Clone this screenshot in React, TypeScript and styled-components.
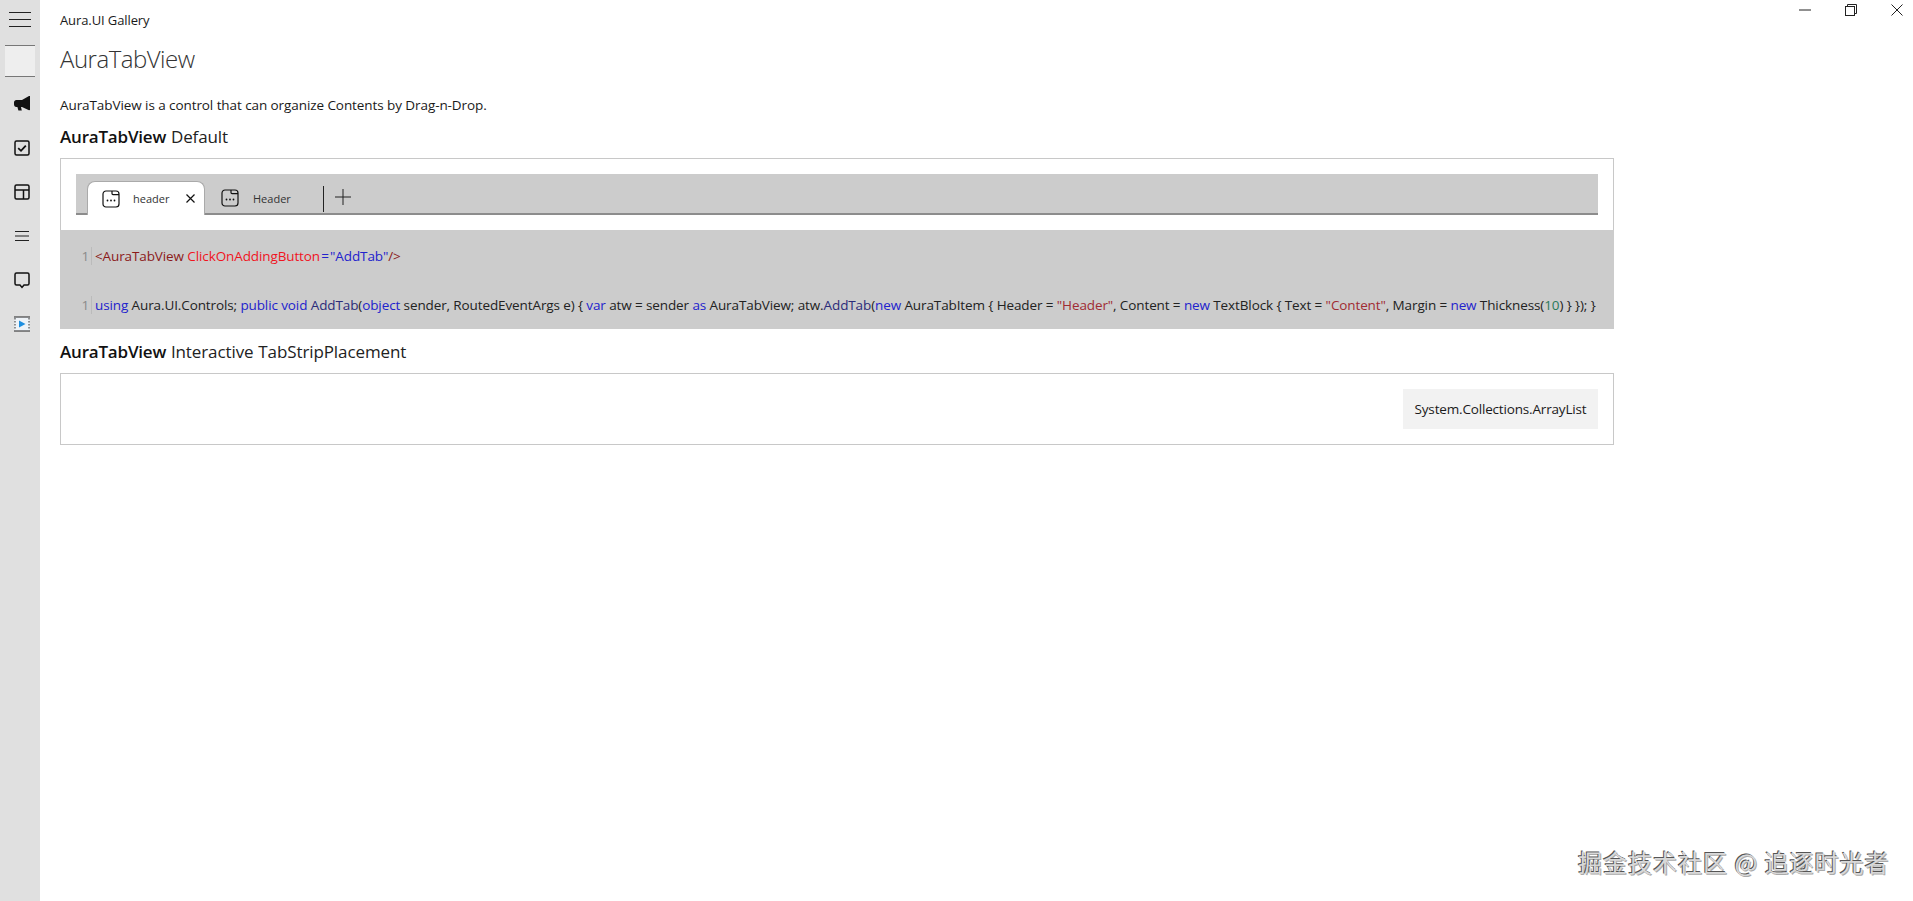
import React from "react";
import styled, { createGlobalStyle } from "styled-components";

const GlobalStyle = createGlobalStyle`
  html, body { margin: 0; padding: 0; background: #fff; }
  body { font-family: "Open Sans", "Noto Sans", sans-serif; color: #1a1a1a; overflow: hidden; }
`;

const CalendarIcon = () => (
  <svg width="18" height="18" viewBox="0 0 18 18" fill="none" stroke="#111" strokeWidth="1.2">
    <rect x="1" y="1" width="16" height="16" rx="3" />
    <path d="M10 1v2.600a1 1 0 0 0 1 1h6" />
    <circle cx="5.500" cy="10.500" r=".9" fill="#111" stroke="none" />
    <circle cx="9" cy="10.500" r=".9" fill="#111" stroke="none" />
    <circle cx="12.500" cy="10.500" r=".9" fill="#111" stroke="none" />
  </svg>
);

const MegaphoneIcon = () => (
  <svg width="18" height="18" viewBox="0 0 18 18" fill="#111">
    <path d="M17 1v14l-1 .2L9 12H8l.8 3.600H5.400L4.400 12H3.400C1.800 12 1 10.800 1 9.200V7.400C1 6 2 5 3.400 5H9l7-4z" />
  </svg>
);

const CheckIcon = () => (
  <svg width="16" height="16" viewBox="0 0 16 16" fill="none" stroke="#111">
    <rect x="1" y="1" width="14" height="14" rx="1.500" strokeWidth="1.500" />
    <path d="M4.200 8.200 7 10.800l4.800-5.200" strokeWidth="1.800" />
  </svg>
);

const LayoutIcon = () => (
  <svg width="16" height="16" viewBox="0 0 16 16" fill="none" stroke="#111" strokeWidth="1.500">
    <rect x="1" y="1" width="14" height="14" rx="1.500" />
    <path d="M1 6h14M9.500 6v9" />
  </svg>
);

const LinesIcon = () => (
  <svg width="14" height="12" viewBox="0 0 14 12" fill="none" stroke="#222" strokeWidth="1">
    <path d="M0 1.500h14M0 6h14M0 10.500h14" />
  </svg>
);

const ChatIcon = () => (
  <svg width="16" height="17" viewBox="0 0 16 17" fill="none" stroke="#111" strokeWidth="1.500">
    <path d="M2.500 1h11A1.500 1.500 0 0 1 15 2.500v9a1.500 1.500 0 0 1-1.500 1.500H10l-2 2.400L6 13H2.500A1.500 1.500 0 0 1 1 11.500v-9A1.500 1.500 0 0 1 2.500 1z" />
  </svg>
);

const VideoIcon = () => (
  <svg width="16" height="16" viewBox="0 0 16 16" fill="none">
    <rect x=".5" y="1" width="15" height="14" fill="#eef3f8" />
    <path d="M0 1h16M0 15h16" stroke="#222" strokeWidth="1.200" />
    <path d="M1 2v12M15 2v12" stroke="#333" strokeWidth="1" strokeDasharray="1.500 1.500" />
    <path d="M5 4.500v7L11.500 8z" fill="#1e8fe0" />
  </svg>
);

const Page = styled.div`
  position: relative;
  display: flex;
  width: 1913px;
  height: 901px;
`;

const Sidebar = styled.nav`
  width: 40px;
  flex-shrink: 0;
  background: #e0e0e0;
  display: flex;
  flex-direction: column;
  align-items: center;
`;

const Hamburger = styled.div`
  width: 22px;
  height: 15px;
  margin-top: 12px;
  border-top: 1px solid #222;
  border-bottom: 1px solid #222;
  position: relative;
  box-sizing: border-box;
  &::after {
    content: "";
    position: absolute;
    left: 0;
    right: 0;
    top: 6px;
    height: 1px;
    background: #222;
  }
`;

const SelectedItem = styled.div`
  width: 30px;
  height: 32px;
  margin-top: 18px;
  box-sizing: border-box;
  background: #eeeeee;
  border-top: 1px solid #777;
  border-bottom: 1px solid #777;
`;

const NavItem = styled.div`
  height: 44px;
  width: 100%;
  display: flex;
  align-items: center;
  justify-content: center;
  padding-left: 4px;
  box-sizing: border-box;
`;

const NavList = styled.div`
  margin-top: 5px;
  display: flex;
  flex-direction: column;
`;

const Main = styled.main`
  flex: 1;
  padding-left: 20px;
  display: flex;
  flex-direction: column;
  align-items: flex-start;
`;

const AppTitle = styled.div`
  font-size: 13px;
  line-height: 16px;
  margin-top: 12px;
  letter-spacing: -0.1px;
`;

const PageTitle = styled.h1`
  font-family: "Open Sans", sans-serif;
  font-weight: 300;
  font-size: 24px;
  line-height: 32px;
  margin: 15px 0 0;
  color: #333;
  letter-spacing: -0.5px;
`;

const Description = styled.p`
  font-size: 13.5px;
  line-height: 18px;
  margin: 21px 0 0;
  letter-spacing: -0.08px;
`;

const SectionTitle = styled.h2<{ $first?: boolean }>`
  font-size: 17px;
  line-height: 24px;
  font-weight: 400;
  margin: 11px 0 0;
  letter-spacing: -0.1px;
  word-spacing: 0.5px;
  color: #222;
  strong {
    font-weight: 600;
    color: #111;
    letter-spacing: -0.2px;
  }
`;

const Card = styled.section`
  width: 1554px;
  box-sizing: border-box;
  border: 1px solid #c8c8c8;
  margin-top: 9px;
`;

const DemoArea = styled.div`
  padding: 15px;
  height: 71px;
  box-sizing: border-box;
`;

const TabStrip = styled.div`
  height: 41px;
  background: #cccccc;
  border-bottom: 2px solid #8c8c8c;
  box-sizing: border-box;
  display: flex;
  align-items: flex-end;
  padding-left: 11px;
  position: relative;
`;

const Tab = styled.div<{ $active?: boolean }>`
  height: 34px;
  margin-bottom: -2px;
  width: ${({ $active }) => ($active ? "118px" : "116px")};
  box-sizing: border-box;
  display: flex;
  align-items: center;
  padding-left: ${({ $active }) => ($active ? "14px" : "16px")};
  font-size: 11px;
  color: #333;
  background: ${({ $active }) => ($active ? "#fff" : "transparent")};
  border-radius: 8px 8px 0 0;
  ${({ $active }) => $active && "border: 1px solid #aaa; border-bottom: none;"}
`;

const TabLabel = styled.span<{ $active?: boolean }>`
  margin-left: ${({ $active }) => ($active ? "13px" : "14px")};
  flex: 1;
`;

const TabClose = styled.svg`
  margin-right: 9px;
`;

const TabDivider = styled.div`
  width: 1px;
  height: 26px;
  background: #222;
  align-self: flex-start;
  margin: 12px 0 0 2px;
`;

const AddTab = styled.svg`
  align-self: flex-start;
  margin: 15px 0 0 11px;
`;

const CodeBlock = styled.div`
  background: #cccccc;
  height: 99px;
  margin: 0 -1px -1px;
  padding-top: 17px;
  box-sizing: border-box;
  display: flex;
  flex-direction: column;
  gap: 31px;
`;

const CodeLine = styled.div`
  display: flex;
  font-size: 13.5px;
  line-height: 18px;
  height: 18px;
  white-space: nowrap;
  color: #222;
  letter-spacing: -0.11px;
`;

const LineNo = styled.span`
  width: 32px;
  text-align: right;
  color: #8a8a8a;
  border-right: 1px solid #bbb;
  padding-right: 2px;
  margin-right: 3px;
  box-sizing: border-box;
  flex-shrink: 0;
`;

const Token = styled.span<{ $c: string }>`
  color: ${({ $c }) => $c};
  white-space: pre;
`;

const PlacementRow = styled.div`
  height: 70px;
  box-sizing: border-box;
  padding: 15px;
  display: flex;
  justify-content: flex-end;
`;

const PlacementBox = styled.div`
  width: 195px;
  height: 40px;
  background: #f2f2f2;
  font-size: 13.5px;
  display: flex;
  align-items: center;
  justify-content: center;
  letter-spacing: -0.17px;
  padding-bottom: 1px;
  box-sizing: border-box;
`;

const WindowButtons = styled.div`
  position: absolute;
  top: 3px;
  right: -7px;
  display: flex;
  align-items: center;
  height: 14px;
`;

const WindowButton = styled.div`
  width: 46px;
  display: flex;
  justify-content: center;
  align-items: center;
`;

const Watermark = styled.div`
  position: absolute;
  left: 1578px;
  top: 844px;
  font-family: "Noto Sans CJK SC", sans-serif;
  font-size: 24px;
  line-height: 36px;
  color: #d8d8d8;
  letter-spacing: 1px;
  white-space: nowrap;
  text-shadow: -1px -1px 0 #555, 1px 1px 0 #aaa;
`;

const xaml: [string, string][] = [
  ["<AuraTabView ", "#8b1a1a"],
  ["ClickOnAddingButton", "#f0141e"],
  ["\u200a=\u200a", "#2222cc"],
  ['"AddTab"', "#2222cc"],
  ["/>", "#8b1a1a"],
];

const B = "#2222cc";
const T = "#222";
const R = "#a02b33";

const csharp: [string, string][] = [
  ["using", B], [" Aura.UI.Controls; ", T], ["public void", B], [" ", T],
  ["AddTab", "#2b2b7a"], ["(", T], ["object", B], [" sender, RoutedEventArgs e) { ", T],
  ["var", B], [" atw = sender ", T], ["as", B], [" AuraTabView; atw.", T],
  ["AddTab", "#2b2b7a"], ["(", T], ["new", B], [" AuraTabItem { Header = ", T],
  ['"Header"', R], [", Content = ", T], ["new", B], [" TextBlock { Text = ", T],
  ['"Content"', R], [", Margin = ", T], ["new", B], [" Thickness(", T],
  ["10", "#2a7a5a"], [") } }); }", T],
];

export default function App() {
  const navIcons = [
    <MegaphoneIcon />, <CheckIcon />, <LayoutIcon />, <LinesIcon />, <ChatIcon />, <VideoIcon />,
  ];

  return (
    <Page>
      <GlobalStyle />
      <Sidebar>
        <Hamburger />
        <SelectedItem />
        <NavList>
          {navIcons.map((icon, i) => (
            <NavItem key={i}>{icon}</NavItem>
          ))}
        </NavList>
      </Sidebar>
      <Main>
        <AppTitle>Aura.UI Gallery</AppTitle>
        <PageTitle>AuraTabView</PageTitle>
        <Description>AuraTabView is a control that can organize Contents by Drag-n-Drop.</Description>
        <SectionTitle>
          <strong>AuraTabView</strong> Default
        </SectionTitle>
        <Card>
          <DemoArea>
            <TabStrip>
              <Tab $active>
                <CalendarIcon />
                <TabLabel $active>header</TabLabel>
                <TabClose width="9" height="9" viewBox="0 0 9 9" stroke="#111" strokeWidth="1.200">
                  <path d="M.5.5l8 8M8.500.5l-8 8" />
                </TabClose>
              </Tab>
              <Tab>
                <CalendarIcon />
                <TabLabel>Header</TabLabel>
              </Tab>
              <TabDivider />
              <AddTab width="16" height="16" viewBox="0 0 16 16" stroke="#222" strokeWidth="1">
                <path d="M8 0v16M0 8h16" />
              </AddTab>
            </TabStrip>
          </DemoArea>
          <CodeBlock>
            <CodeLine>
              <LineNo>1</LineNo>
              {xaml.map(([text, color], i) => (
                <Token key={i} $c={color}>{text}</Token>
              ))}
            </CodeLine>
            <CodeLine>
              <LineNo>1</LineNo>
              {csharp.map(([text, color], i) => (
                <Token key={i} $c={color}>{text}</Token>
              ))}
            </CodeLine>
          </CodeBlock>
        </Card>
        <SectionTitle>
          <strong>AuraTabView</strong> Interactive TabStripPlacement
        </SectionTitle>
        <Card>
          <PlacementRow>
            <PlacementBox>System.Collections.ArrayList</PlacementBox>
          </PlacementRow>
        </Card>
      </Main>
      <WindowButtons>
        <WindowButton>
          <svg width="12" height="2" viewBox="0 0 12 2" stroke="#222"><path d="M0 1h12" /></svg>
        </WindowButton>
        <WindowButton>
          <svg width="12" height="12" viewBox="0 0 12 12" fill="none" stroke="#222">
            <rect x=".5" y="2.500" width="9" height="9" />
            <path d="M2.500 2.500v-2h9v9h-2" />
          </svg>
        </WindowButton>
        <WindowButton>
          <svg width="12" height="12" viewBox="0 0 12 12" stroke="#222"><path d="M.5.5l11 11M11.500.5l-11 11" /></svg>
        </WindowButton>
      </WindowButtons>
      <Watermark>掘金技术社区 @ 追逐时光者</Watermark>
    </Page>
  );
}
